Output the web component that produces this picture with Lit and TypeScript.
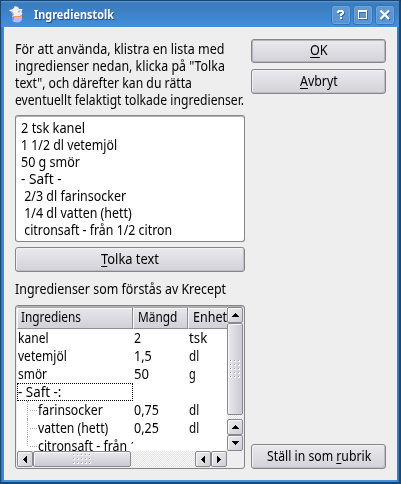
import { LitElement, html, css, svg } from "lit";
import { customElement, property } from "lit/decorators.js";

@customElement("fit-text")
class FitText extends LitElement {
  @property({ type: Number }) w = 0;
  @property() text = "";
  @property() key = "";
  static styles = css`
    :host { display: block; height: 17px; line-height: 17px; white-space: pre; overflow: visible; }
    .ink { display: inline-block; transform-origin: 0 0; }
    .key { text-decoration: underline; text-underline-offset: 2px; text-decoration-thickness: 1px; text-decoration-skip-ink: none; }
  `;
  render() {
    const at = this.key ? this.text.indexOf(this.key) : -1;
    return at < 0
      ? html`<span class="ink">${this.text}</span>`
      : html`<span class="ink">${this.text.slice(0, at)}<span class="key">${this.key}</span>${this.text.slice(at + this.key.length)}</span>`;
  }
  updated() {
    const ink = this.renderRoot.querySelector(".ink") as HTMLElement;
    this.style.width = this.w + "px";
    ink.style.transform = "scaleX(" + this.w / ink.offsetWidth + ")";
  }
}

const t = (text: string, w: number, key = "") => html`<fit-text .text=${text} .w=${w} .key=${key}></fit-text>`;

const arrows: Record<string, string> = {
  up: "M3 0h1v1h1v1h1v1h1v1H0V3h1V2h1V1h1z",
  down: "M0 0h7v1H6v1H5v1H4v1H3V3H2V2H1V1H0z",
  left: "M0 3h1V2h1V1h1V0h1v7H3V6H2V5H1V4H0z",
  right: "M0 0h1v1h1v1h1v1h1v1H3v1H2v1H1v1H0z",
};
const arrow = (d: string) => {
  const v = d === "up" || d === "down";
  return html`<div class="sb"><svg width=${v ? 7 : 4} height=${v ? 4 : 7} shape-rendering="crispEdges">${svg`<path d=${arrows[d]}/>`}</svg></div>`;
};

const rows = [
  { n: ["kanel", 31], q: ["2", 7], u: ["tsk", 18] },
  { n: ["vetemjöl", 49], q: ["1,5", 18], u: ["dl", 10] },
  { n: ["smör", 29], q: ["50", 15], u: ["g", 7] },
  { n: ["- Saft -:", 43], focus: true },
  { n: ["farinsocker", 65], q: ["0,75", 25], u: ["dl", 10], child: true },
  { n: ["vatten (hett)", 70], q: ["0,25", 25], u: ["dl", 10], child: true },
  { n: ["citronsaft - från 1/2 citron", 148], child: true, last: true },
] as any[];

@customElement("app-root")
class AppRoot extends LitElement {
  static styles = css`
    :host { display: block; width: 401px; height: 484px; background: #173b62; font: 14px "Noto Sans", sans-serif; color: #000; overflow: hidden; }
    * { box-sizing: border-box; }
    svg { display: block; }
    .window { width: 401px; height: 484px; border: 1px solid #1b466f; border-bottom-width: 2px; border-right-width: 2px; border-radius: 3px 3px 0 0; background: linear-gradient(90deg, #2f75ba, #4390dd 3px, #4390dd 395px, #2f75ba); padding: 0 2px 2px 3px; display: flex; flex-direction: column; }
    .title { height: 26px; margin: 0 -2px 0 -3px; padding: 4px 4px 0 8px; display: flex; background: linear-gradient(#5a9ad8, #3b7cbd 2px, #3c80c4 9px, #438fdc 25px); color: #fff; font-weight: bold; font-size: 12.5px; }
    .title fit-text { margin: 1px 0 0 8px; text-shadow: 1px 1px 1px #1c4470; flex: none; }
    .tools { display: flex; gap: 2px; margin-left: auto; }
    .tool { width: 20px; height: 20px; border: 1px solid #3675b5; border-radius: 3px; background: linear-gradient(#6299d2, #5694d5); box-shadow: inset 0 0 0 1px #6ba5df; }
    .tool svg { margin: -1px; filter: drop-shadow(1px 1px 0 #356ea8); }
    .body { flex: 1; background: #eee; display: flex; padding: 12px 11px 0 11px; gap: 6px; border-top: 1px solid #f4f4f4; }
    .main { width: 230px; display: flex; flex-direction: column; }
    .intro { height: 75px; }
    .box { background: #fff; border: 1px solid #858585; border-top: 1px solid #8a8a8a; box-shadow: inset 0 1px 0 #b0b0b0; border-radius: 3px; }
    .source { height: 127px; padding: 3px 5px; }
    .btn { height: 25px; border: 1px solid #85858a; border-radius: 3px; background: linear-gradient(#e9e9ee, #d2d2d8); box-shadow: inset 1px 1px 0 #f2f2f5, inset -1px -1px 0 #bdbdc3; display: flex; justify-content: center; padding-top: 2px; flex: none; }
    .parse { margin: 5px 0 8px; }
    .list { height: 164px; margin-top: 8px; background: #eee; border: 1px solid #858585; border-radius: 3px; box-shadow: inset 0 1px 0 #b0b0b0; padding: 1px; display: grid; grid-template-columns: 210px 16px; grid-template-rows: 144px 16px; }
    .table { background: #fff; overflow: hidden; }
    .head { display: flex; height: 22px; }
    .h { height: 22px; background: linear-gradient(#e6e6eb, #d0d0d7); border: 1px solid #8f8f95; border-top-color: #a8a8ad; border-left-color: #f7f7f7; padding: 0 0 0 3px; flex: none; box-shadow: inset 0 1px 0 #f6f6f8; }
    .c1 { width: 116px; } .c2 { width: 55px; } .c3 { width: 60px; }
    .c2.h, .c3.h { padding-left: 4px; }
    .row { display: flex; height: 18px; }
    .cell { padding-left: 1px; overflow: hidden; flex: none; height: 18px; }
    .focus { outline: 1px dotted #000; outline-offset: -1px; }
    .child { display: flex; padding-left: 10px; }
    .branch { width: 11px; height: 18px; border-left: 1px dotted #aaa; flex: none; }
    .branch::after { content: ""; display: block; height: 9px; margin-left: 2px; width: 7px; border-bottom: 1px dotted #aaa; }
    .last { height: 9px; }
    .track { background: repeating-conic-gradient(#e4e4e4 0 25%, #fafafa 0 50%) 0 0 / 2px 2px; display: flex; }
    .v { flex-direction: column; }
    .sb, .thumb { width: 16px; height: 16px; border: 1px solid #88888e; border-radius: 2px; background: linear-gradient(135deg, #ececf0, #cfcfd5); box-shadow: inset 1px 1px 0 #f7f7f9; display: flex; align-items: center; justify-content: center; flex: none; }
    .v .thumb { height: 92px; margin-bottom: 4px; background: linear-gradient(90deg, #e8e8ed, #cacad1); }
    .hz .thumb { width: 98px; margin-right: 64px; background: linear-gradient(#e8e8ed, #cacad1); }
    .actions { width: 135px; display: flex; flex-direction: column; }
    .ok { height: 24px; margin-top: -1px; padding-top: 1px; box-shadow: inset 0 0 0 1px #b5b5ba; }
    .cancel { margin-top: 6px; }
    .rubric { margin-top: auto; margin-bottom: 11px; }
  `;
  grip(v: boolean) {
    const dots = [];
    const c = v ? 3 : 5, r = v ? 5 : 3;
    for (let x = 0; x < c; x++) for (let y = 0; y < r; y++)
      dots.push(svg`<rect x=${x * 4} y=${y * 4} width="2" height="2" fill="#fafafa"/><rect x=${x * 4} y=${y * 4} width="1" height="1" fill="#999"/>`);
    return html`<svg width=${c * 4 - 2} height=${r * 4 - 2}>${dots}</svg>`;
  }
  render() {
    return html`<div class="window">
      <div class="title">
        <svg width="17" height="18" viewBox="0 0 17 18">
          <path d="M3 10.500h10v4q-1 3-5 3t-5-3z" fill="#b9b9f5"/><path d="M3 12h2v3H3z" fill="#8d8de0"/>
          <path d="M4 10l9-1v2l-2 1H6l-2-1z" fill="#f59a3c"/>
          <path d="M0 5l4-1 2-3 3 1 1 2 3.500 0-1 3 1 2-3 2-6 0-1-3z" fill="#f0f0f0"/><path d="M0 5l4 2 1 3H3.500L3 8z M9 6l3-1-2 3z" fill="#b4b0ac"/>
        </svg>
        ${t("Ingredienstolk", 80)}
        <div class="tools">
          <div class="tool"><svg width="20" height="20" fill="#fff" shape-rendering="crispEdges"><path d="M7 5h5v1h1v3h-1v1h-1v1H9V9h1V8h1V7H8v1H6V6h1zM9 12h2v2H9z"/></svg></div>
          <div class="tool"><svg width="20" height="20" fill="#fff" fill-rule="evenodd" shape-rendering="crispEdges"><path fill-rule="evenodd" d="M5 5h9v9H5zM6 7v6h7V7z"/></svg></div>
          <div class="tool"><svg width="20" height="20" fill="none" stroke="#fff" stroke-width="2.300"><path d="M5.500 5.500l8.500 8.500M14 5.500l-8.500 8.500"/></svg></div>
        </div>
      </div>
      <div class="body">
        <div class="main">
          <div class="intro">
            ${t("För att använda, klistra en lista med", 209)}${t('ingredienser nedan, klicka på "Tolka', 210)}
            ${t('text", och därefter kan du rätta', 177)}${t("eventuellt felaktigt tolkade ingredienser.", 229)}
          </div>
          <div class="box source">
            ${t("2 tsk kanel", 64)}${t("1 1/2 dl vetemjöl", 96)}${t("50 g smör", 59)}${t("- Saft -", 41)}
            ${t(" 2/3 dl farinsocker", 105)}${t(" 1/4 dl vatten (hett)", 111)}${t(" citronsaft - från 1/2 citron", 151)}
          </div>
          <div class="btn parse">${t("Tolka text", 58, "T")}</div>
          ${t("Ingredienser som förstås av Krecept", 211)}
          <div class="list">
            <div class="table">
              <div class="head"><div class="h c1">${t("Ingrediens", 60)}</div><div class="h c2">${t("Mängd", 39)}</div><div class="h c3">${t("Enhet", 34)}</div></div>
              ${rows.map((r) => html`<div class="row">
                <div class="cell c1 ${r.focus ? "focus" : ""} ${r.child ? "child" : ""}">${r.child ? html`<div class="branch ${r.last ? "last" : ""}"></div>` : ""}${t(r.n[0], r.n[1])}</div>
                <div class="cell c2">${r.q ? t(r.q[0], r.q[1]) : ""}</div><div class="cell c3">${r.u ? t(r.u[0], r.u[1]) : ""}</div>
              </div>`)}
            </div>
            <div class="track v">${arrow("up")}<div class="thumb">${this.grip(true)}</div>${arrow("up")}${arrow("down")}</div>
            <div class="track hz">${arrow("left")}<div class="thumb">${this.grip(false)}</div>${arrow("left")}${arrow("right")}</div>
          </div>
        </div>
        <div class="actions">
          <div class="btn ok">${t("OK", 18, "O")}</div>
          <div class="btn cancel">${t("Avbryt", 38, "A")}</div>
          <div class="btn rubric">${t("Ställ in som rubrik", 104, "r")}</div>
        </div>
      </div>
    </div>`;
  }
}
